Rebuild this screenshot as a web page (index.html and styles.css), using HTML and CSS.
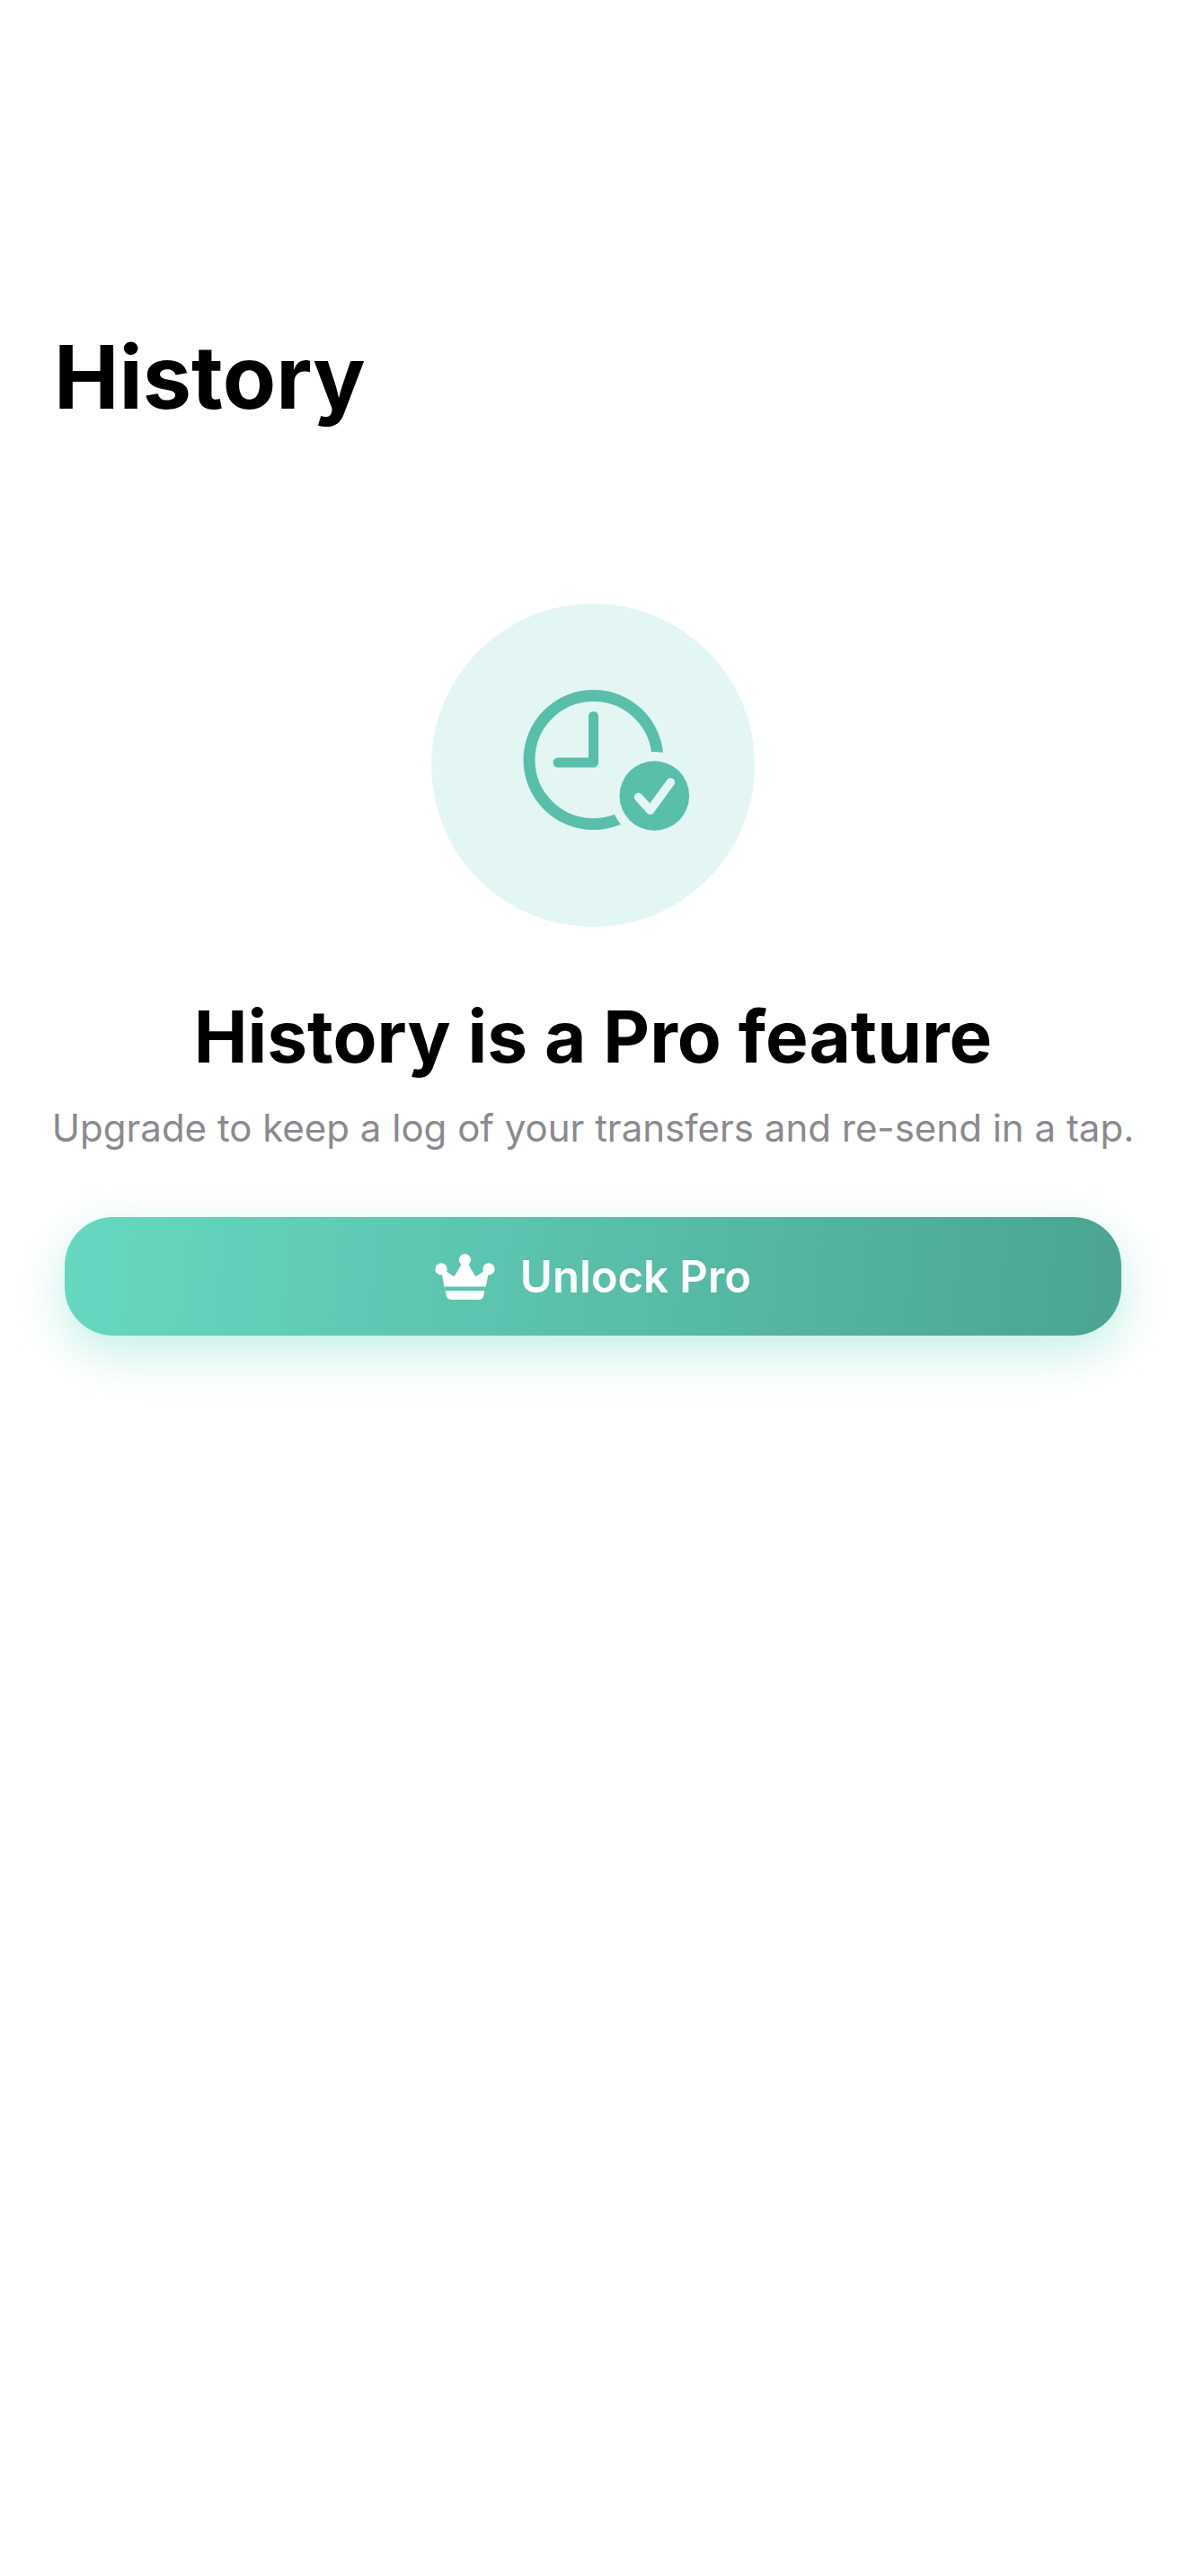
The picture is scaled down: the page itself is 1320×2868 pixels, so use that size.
FILE: index.html
```
<!DOCTYPE html>
<html lang="en">

<head>
  <meta charset="UTF-8">
  <meta name="viewport" content="width=device-width, initial-scale=1.0">
  <title>History</title>
  <link rel="stylesheet" href="styles.css">
</head>

<body>
  <header class="page-header">
    <h1>History</h1>
  </header>

  <main class="paywall">
    <div class="paywall-icon">
      <svg viewBox="0 0 360 360" fill="none" aria-hidden="true">
        <mask id="badgeGap">
          <rect width="360" height="360" fill="#fff" />
          <circle cx="248.3" cy="214" r="49" fill="#000" />
        </mask>
        <circle cx="180.5" cy="174" r="71.5" stroke="#59bfab" stroke-width="13" mask="url(#badgeGap)" />
        <path d="M180.5 125.5V177H141" stroke="#59bfab" stroke-width="11" stroke-linecap="round" stroke-linejoin="round" />
        <circle cx="248.3" cy="214" r="38.8" fill="#59bfab" />
        <path d="M230.7 215.6L243.7 230L266.3 199" stroke="#e4f6f4" stroke-width="9.6" stroke-linecap="round" stroke-linejoin="round" />
      </svg>
    </div>
    <h2>History is a Pro feature</h2>
    <p>Upgrade to keep a log of your transfers and re-send in a tap.</p>
    <button type="button" class="unlock-btn">
      <svg class="crown" viewBox="80 74 200 154" fill="#fff" aria-hidden="true">
        <circle cx="180" cy="94" r="20" />
        <circle cx="100" cy="125" r="20" />
        <circle cx="260" cy="125" r="20" />
        <path d="M169 108L146 147Q143 151 139 148L118 133L103 145L110 184H250L258 145L242 133L220 148Q216 151 213 147L191 108Z" />
        <path d="M114 198H246L242 215Q239 228 225 228H136Q121 228 118 215Z" />
      </svg>
      <span>Unlock Pro</span>
    </button>
  </main>
</body>

</html>
```
FILE: styles.css
```
* {
  box-sizing: border-box;
}

body {
  margin: 0;
  min-height: 100vh;
  background-color: #fff;
  color: #000;
  font-family: Inter, "Liberation Sans", sans-serif;
}

.page-header {
  padding: 360px 60px 0;
}

h1,
h2,
p {
  margin: 0;
}

h1 {
  font-size: 97px;
  line-height: 120px;
  font-weight: 700;
}

.paywall {
  display: flex;
  flex-direction: column;
  align-items: center;
  padding: 192px 48px 0;
  text-align: center;
}

.paywall-icon {
  width: 360px;
  height: 360px;
  border-radius: 50%;
  background-color: #e4f6f4;
}

.paywall-icon svg {
  display: block;
  width: 100%;
}

h2 {
  margin-top: 72px;
  font-size: 80px;
  line-height: 100px;
  font-weight: 700;
}

.paywall p {
  margin-top: 24px;
  color: #8a8a8e;
  font-size: 42px;
  line-height: 56px;
}

.unlock-btn {
  display: flex;
  align-items: center;
  justify-content: center;
  gap: 28px;
  align-self: stretch;
  height: 132px;
  margin: 71px 24px 0;
  padding: 0;
  border: none;
  border-radius: 54px;
  background: linear-gradient(96deg, #66d8c0, #59bfab 50%, #4aa491);
  box-shadow: 0 18px 54px rgba(102, 216, 192, 0.4);
  color: #fff;
  font-family: inherit;
  font-size: 49px;
  font-weight: 600;
  cursor: pointer;
}

.crown {
  width: 67px;
  height: 51px;
}
```
